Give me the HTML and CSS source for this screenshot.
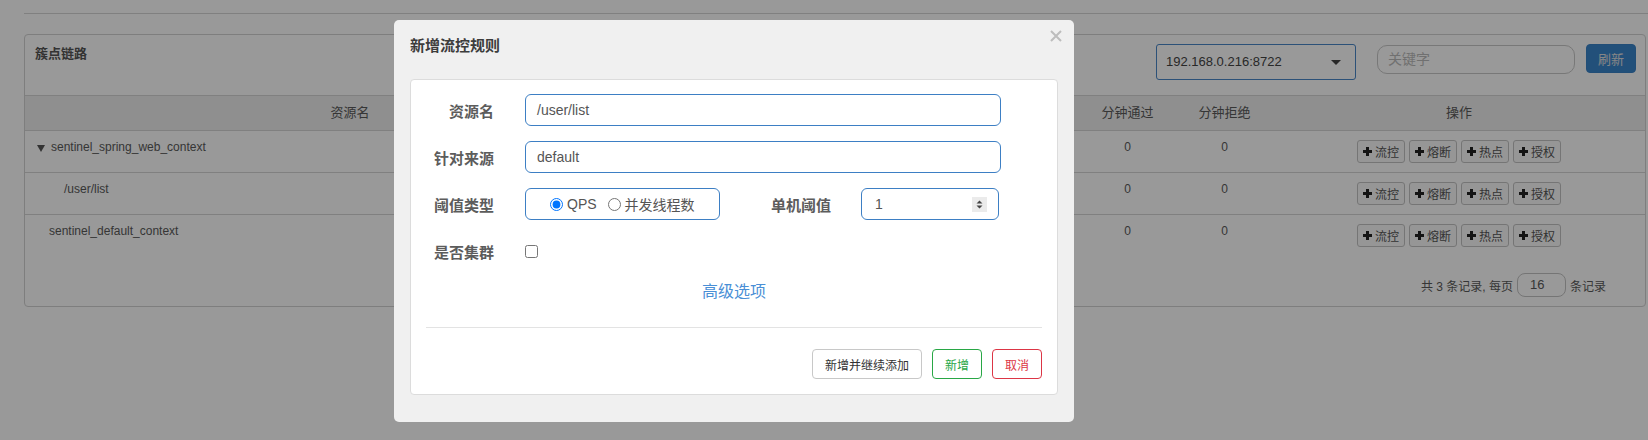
FILE: index.html
```html
<!DOCTYPE html>
<html lang="zh-CN">
<head>
<meta charset="utf-8">
<title>新增流控规则</title>
<link rel="stylesheet" href="styles.css">
</head>
<body>
<div class="page">
  <div class="topline"></div>
  <div class="panel">
    <div class="panel-head">
      <div class="panel-title">簇点链路</div>
      <div class="panel-tools">
        <div class="select">192.168.0.216:8722<span class="caret"></span></div>
        <div class="search">关键字</div>
        <button class="btn-refresh">刷新</button>
      </div>
    </div>
    <div class="table">
      <div class="tr th">
        <div class="td">资源名</div>
        <div class="td">通过QPS</div>
        <div class="td">拒绝QPS</div>
        <div class="td">并发数</div>
        <div class="td">平均RT</div>
        <div class="td">分钟通过</div>
        <div class="td">分钟拒绝</div>
        <div class="td">操作</div>
      </div>
      <div class="tr">
        <div class="td name lvl0"><span class="tri"></span>sentinel_spring_web_context</div>
        <div class="td">0</div><div class="td">0</div><div class="td">0</div><div class="td">0</div>
        <div class="td">0</div><div class="td">0</div>
        <div class="td ops">
          <button class="op"><svg class="plus" viewBox="0 0 9 9"><path d="M3 0h3v3h3v3H6v3H3V6H0V3h3z"/></svg>流控</button>
          <button class="op"><svg class="plus" viewBox="0 0 9 9"><path d="M3 0h3v3h3v3H6v3H3V6H0V3h3z"/></svg>熔断</button>
          <button class="op"><svg class="plus" viewBox="0 0 9 9"><path d="M3 0h3v3h3v3H6v3H3V6H0V3h3z"/></svg>热点</button>
          <button class="op"><svg class="plus" viewBox="0 0 9 9"><path d="M3 0h3v3h3v3H6v3H3V6H0V3h3z"/></svg>授权</button>
        </div>
      </div>
      <div class="tr">
        <div class="td name lvl1">/user/list</div>
        <div class="td">0</div><div class="td">0</div><div class="td">0</div><div class="td">0</div>
        <div class="td">0</div><div class="td">0</div>
        <div class="td ops">
          <button class="op"><svg class="plus" viewBox="0 0 9 9"><path d="M3 0h3v3h3v3H6v3H3V6H0V3h3z"/></svg>流控</button>
          <button class="op"><svg class="plus" viewBox="0 0 9 9"><path d="M3 0h3v3h3v3H6v3H3V6H0V3h3z"/></svg>熔断</button>
          <button class="op"><svg class="plus" viewBox="0 0 9 9"><path d="M3 0h3v3h3v3H6v3H3V6H0V3h3z"/></svg>热点</button>
          <button class="op"><svg class="plus" viewBox="0 0 9 9"><path d="M3 0h3v3h3v3H6v3H3V6H0V3h3z"/></svg>授权</button>
        </div>
      </div>
      <div class="tr last">
        <div class="td name lvl2">sentinel_default_context</div>
        <div class="td">0</div><div class="td">0</div><div class="td">0</div><div class="td">0</div>
        <div class="td">0</div><div class="td">0</div>
        <div class="td ops">
          <button class="op"><svg class="plus" viewBox="0 0 9 9"><path d="M3 0h3v3h3v3H6v3H3V6H0V3h3z"/></svg>流控</button>
          <button class="op"><svg class="plus" viewBox="0 0 9 9"><path d="M3 0h3v3h3v3H6v3H3V6H0V3h3z"/></svg>熔断</button>
          <button class="op"><svg class="plus" viewBox="0 0 9 9"><path d="M3 0h3v3h3v3H6v3H3V6H0V3h3z"/></svg>热点</button>
          <button class="op"><svg class="plus" viewBox="0 0 9 9"><path d="M3 0h3v3h3v3H6v3H3V6H0V3h3z"/></svg>授权</button>
        </div>
      </div>
    </div>
    <div class="pager">共 3 条记录, 每页<span class="pagesize">16</span>条记录</div>
  </div>
</div>

<div class="mask"></div>

<div class="dialog">
  <h3 class="dlg-title">新增流控规则</h3>
  <span class="dlg-close"><svg viewBox="0 0 12 12" width="12" height="12"><path d="M1 1L11 11M11 1L1 11"/></svg></span>
  <div class="dlg-card">
    <div class="f-row">
      <label class="f-label">资源名</label>
      <div class="f-input wide">/user/list</div>
    </div>
    <div class="f-row">
      <label class="f-label">针对来源</label>
      <div class="f-input wide">default</div>
    </div>
    <div class="f-row">
      <label class="f-label">阈值类型</label>
      <div class="f-input radios">
        <input type="radio" name="grade" checked><span class="r-text">QPS</span>
        <input type="radio" name="grade" class="r2"><span class="r-text">并发线程数</span>
      </div>
      <label class="f-label f-label2">单机阈值</label>
      <div class="f-input number">
        <span>1</span>
        <svg class="spin" viewBox="0 0 15 15" width="15" height="15"><rect width="15" height="15" fill="#ebebeb"/><path d="M4.5 6.5L7.5 3.5L10.5 6.5Z M4.5 8.5L7.5 11.5L10.5 8.5Z" fill="#444"/></svg>
      </div>
    </div>
    <div class="f-row row4">
      <label class="f-label">是否集群</label>
      <input type="checkbox" class="chk">
    </div>
    <div class="adv">高级选项</div>
    <div class="divider"></div>
    <div class="actions">
      <button class="btn btn-default">新增并继续添加</button>
      <button class="btn btn-ok">新增</button>
      <button class="btn btn-cancel">取消</button>
    </div>
  </div>
</div>
</body>
</html>
```

FILE: styles.css
```css
* { box-sizing: border-box; }
html, body { margin: 0; padding: 0; }
body {
  width: 1648px;
  height: 440px;
  overflow: hidden;
  background: #fff;
  font-family: "Liberation Sans", Arial, "Noto Sans CJK SC", sans-serif;
  font-size: 12px;
  color: #555;
}

.page { padding: 13px 0 0 24px; }
.topline { border-top: 1px solid #d6d6d6; }

.panel {
  margin-top: 20px;
  width: 1622px;
  border: 1px solid #d2d2d2;
  border-radius: 4px;
}
.panel-head {
  height: 61px;
  border-bottom: 1px solid #d6d6d6;
  padding: 9px 9px 0 10px;
  display: flex;
  justify-content: space-between;
  align-items: flex-start;
}
.panel-title {
  font-size: 13px;
  font-weight: 700;
  line-height: 20px;
  color: #555;
}
.panel-tools { display: flex; align-items: flex-start; }
.select {
  width: 200px;
  height: 36px;
  border: 1px solid #4a87c8;
  border-radius: 3px;
  padding-left: 9px;
  font-size: 13px;
  line-height: 34px;
  color: #444;
  display: flex;
  justify-content: space-between;
  align-items: center;
  padding-right: 14px;
}
.caret {
  width: 0; height: 0;
  border-left: 5px solid transparent;
  border-right: 5px solid transparent;
  border-top: 5px solid #444;
}
.search {
  width: 198px;
  height: 29px;
  margin: 1px 0 0 21px;
  border: 1px solid #c8c8c8;
  border-radius: 10px;
  padding-left: 10px;
  font-size: 14px;
  line-height: 27px;
  color: #bbb;
}
.btn-refresh {
  width: 50px;
  height: 29px;
  margin-left: 11px;
  border: 1px solid #3a82c6;
  border-radius: 4px;
  background: #3a85cb;
  color: #e0e0e0;
  font: 13px "Liberation Sans", "Noto Sans CJK SC", sans-serif;
  padding: 0;
}

.tr {
  display: grid;
  grid-template-columns: 650px 101px 101px 101px 101px 97px 97px 1fr;
  height: 42px;
  border-bottom: 1px solid #d6d6d6;
}
.tr.last { height: 41px; border-bottom: 0; }
.tr.th {
  height: 35px;
  background: #eeeeee;
  align-items: center;
  font-size: 13px;
  color: #6a6a6a;
}
.tr.th .td { text-align: center; line-height: 18px; padding: 0; }
.td {
  text-align: center;
  padding-top: 7px;
  line-height: 18px;
  color: #5a5a5a;
}
.td.name { text-align: left; }
.lvl0 { padding-left: 12px; display: flex; align-items: flex-start; }
.lvl1 { padding-left: 39px; }
.lvl2 { padding-left: 24px; }
.tri {
  width: 0; height: 0;
  margin: 7px 6px 0 0;
  border-left: 4.5px solid transparent;
  border-right: 4.5px solid transparent;
  border-top: 7px solid #555;
}
.ops {
  padding-top: 9px;
  display: flex;
  justify-content: center;
  gap: 4px;
}
.op {
  width: 48px;
  height: 23px;
  border: 1px solid #c4c4c4;
  border-radius: 3px;
  background: #fbfbfb;
  color: #555;
  font: 12px "Liberation Sans", "Noto Sans CJK SC", sans-serif;
  padding: 0 0 0 5px;
  display: flex;
  align-items: center;
  gap: 3px;
}
.plus { width: 9px; height: 9px; fill: #222; flex: none; }

.pager {
  height: 50px;
  padding: 8px 39px 0 0;
  display: flex;
  align-items: center;
  justify-content: flex-end;
  font-size: 12px;
  color: #5a5a5a;
}
.pagesize {
  width: 49px;
  height: 24px;
  margin: 0 4px 0 4px;
  border: 1px solid #c4c4c4;
  border-radius: 8px;
  padding-left: 12px;
  font-size: 13px;
  line-height: 22px;
}

.mask {
  position: fixed;
  inset: 0;
  background: rgba(0, 0, 0, 0.4);
}

.dialog {
  position: fixed;
  left: 394px;
  top: 20px;
  width: 680px;
  background: #f0f0f0;
  border-radius: 5px;
  padding: 16px 16px 27px;
}
.dlg-title {
  margin: 0 0 23px;
  font-size: 15px;
  line-height: 20px;
  font-weight: 700;
  color: #3c3c3c;
}
.dlg-close {
  position: absolute;
  top: 10px;
  right: 12px;
  width: 12px;
  height: 12px;
}
.dlg-close svg { display: block; stroke: #bdbdbd; stroke-width: 2; }

.dlg-card {
  background: #fff;
  border: 1px solid #dcdcdc;
  border-radius: 4px;
  padding: 14px 15px 15px;
}
.f-row {
  display: flex;
  align-items: center;
  height: 32px;
  margin-bottom: 15px;
}
.f-row.row4 { margin-top: 6px; margin-bottom: 0; }
.f-label {
  width: 68px;
  margin-right: 31px;
  text-align: right;
  font-size: 15px;
  font-weight: 700;
  color: #5c5c5c;
}
.f-label2 { width: 60px; margin-left: 51px; margin-right: 30px; }
.f-input {
  height: 32px;
  border: 1px solid #3d7fc4;
  border-radius: 6px;
  font-size: 14px;
  color: #555;
  display: flex;
  align-items: center;
  padding-left: 11px;
}
.f-input.wide { width: 476px; }
.f-input.radios { width: 195px; padding-left: 24px; }
.radios input {
  width: 13px;
  height: 13px;
  margin: 0;
}
.radios input.r2 { margin-left: 11px; }
.r-text { margin-left: 4px; }
.f-input.number {
  width: 138px;
  padding-left: 13px;
  padding-right: 11px;
  justify-content: space-between;
}
.spin { display: block; }
.chk {
  width: 13px;
  height: 13px;
  margin: 0;
}
.adv {
  margin-top: 15px;
  text-align: center;
  font-size: 16px;
  line-height: 20px;
  color: #4a8fd6;
}
.divider {
  margin-top: 25px;
  border-top: 1px solid #e3e3e3;
}
.actions {
  margin-top: 21px;
  display: flex;
  justify-content: flex-end;
  gap: 10px;
}
.btn {
  height: 30px;
  padding: 0 12px;
  border-radius: 4px;
  background: #fff;
  font: 12px "Liberation Sans", "Noto Sans CJK SC", sans-serif;
}
.btn-default { border: 1px solid #c8c8c8; color: #333; }
.btn-ok { border: 1px solid #28a745; color: #28a745; }
.btn-cancel { border: 1px solid #dc3545; color: #dc3545; }
```
